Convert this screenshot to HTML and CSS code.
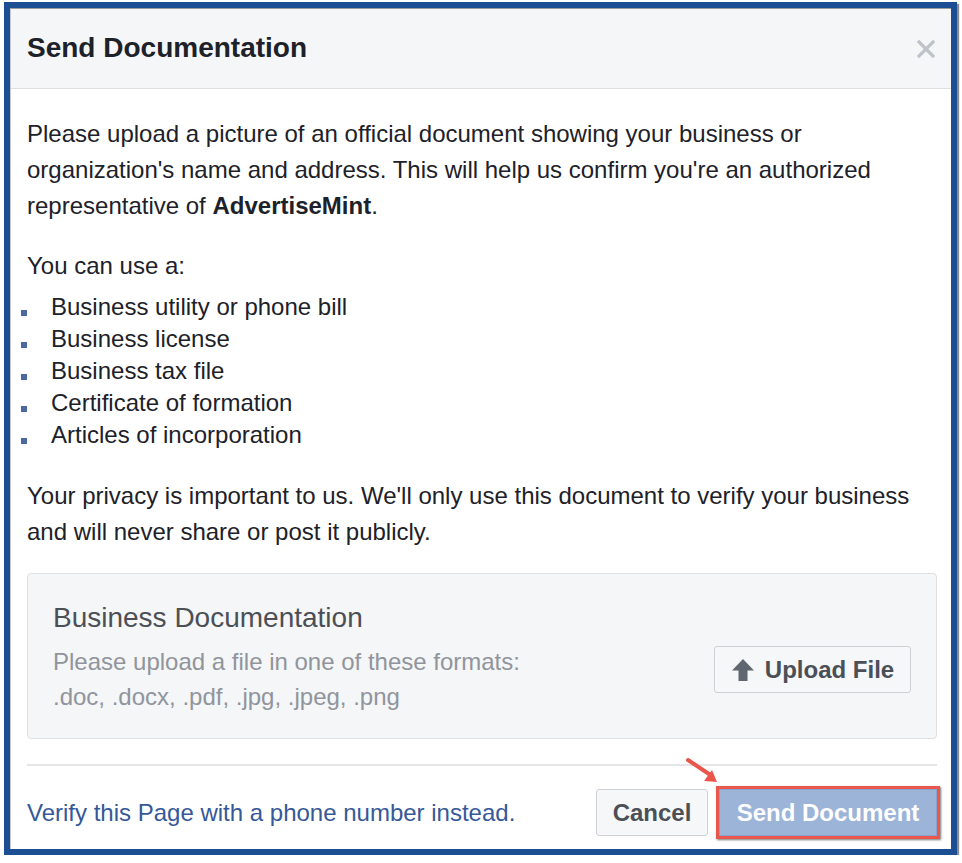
FILE: index.html
```html
<!DOCTYPE html>
<html>
<head>
<meta charset="utf-8">
<link rel="stylesheet" href="styles.css">
</head>
<body>
<div class="frame">
  <div class="dialog">
    <div class="header">
      <h1 class="title">Send Documentation</h1>
      <svg class="close" width="18" height="18" viewBox="0 0 18 18"><path d="M2 2L16 16M16 2L2 16" stroke="#bec3ca" stroke-width="3.2" stroke-linecap="square"/></svg>
    </div>
    <div class="body">
      <p class="para">Please upload a picture of an official document showing your business or organization's name and address. This will help us confirm you're an authorized representative of <b>AdvertiseMint</b>.</p>
      <p class="para">You can use a:</p>
      <ul class="list">
        <li>Business utility or phone bill</li>
        <li>Business license</li>
        <li>Business tax file</li>
        <li>Certificate of formation</li>
        <li>Articles of incorporation</li>
      </ul>
      <p class="para">Your privacy is important to us. We'll only use this document to verify your business and will never share or post it publicly.</p>
      <div class="upload-box">
        <div class="upload-text">
          <div class="upload-title">Business Documentation</div>
          <div class="upload-hint">Please upload a file in one of these formats:<br>.doc, .docx, .pdf, .jpg, .jpeg, .png</div>
        </div>
        <button class="btn upload-btn"><svg width="24" height="24" viewBox="0 0 24 24"><path d="M12 1L23 12.5H16.5V23H7.5V12.5H1Z" fill="#606770"/></svg>Upload File</button>
      </div>
    </div>
    <div class="footer">
      <a class="link" href="#">Verify this Page with a phone number instead.</a>
      <div class="actions">
        <button class="btn cancel">Cancel</button>
        <div class="highlight"><button class="btn primary">Send Document</button></div>
      </div>
    </div>
  </div>
  <svg class="arrow" width="40" height="32" viewBox="0 0 40 32"><path d="M4 4L28 20" stroke="#e9564c" stroke-width="4" stroke-linecap="round"/><path d="M33 26L20 25L28 14Z" fill="#e9564c"/></svg>
</div>
</body>
</html>
```
FILE: styles.css
```css
html, body {
  margin: 0;
  padding: 0;
  background: #ffffff;
}
body {
  font-family: "Liberation Sans", Arial, Helvetica, sans-serif;
  color: #1d2129;
}
.frame {
  position: relative;
  margin: 2px 0 0 4px;
  width: 953px;
  height: 853px;
  box-sizing: border-box;
  border: 6px solid #1b4e93;
  box-shadow: 2px 2px 1px #8c8c8c;
  background: #ffffff;
}
.dialog {
  height: 100%;
  box-sizing: border-box;
  border-top: 1px solid #9a9a9a;
  border-left: 1px solid #c8c8c8;
  display: flex;
  flex-direction: column;
}
.header {
  height: 79px;
  flex: none;
  background: #f5f6f7;
  border-bottom: 1px solid #dddfe2;
  display: flex;
  align-items: center;
  justify-content: space-between;
  padding: 0 16px 0 16px;
}
.title {
  margin: 0;
  font-size: 28px;
  font-weight: bold;
  color: #1d2129;
  padding-bottom: 2px;
}
.close {
  display: block;
  margin-top: 1px;
}
.body {
  padding: 27px 14px 0 16px;
}
.para {
  margin: 0 0 24px 0;
  font-size: 24px;
  line-height: 36px;
  color: #1d2129;
}
.list {
  margin: -17px 0 27px 0;
  padding: 0 0 0 24px;
  list-style: none;
}
.list li {
  position: relative;
  font-size: 24px;
  line-height: 32px;
}
.list li::before {
  content: "";
  position: absolute;
  left: -30px;
  top: 19px;
  width: 6px;
  height: 6px;
  background: #4b67a1;
}
.para + .upload-box { margin-top: -1px; }
.upload-box {
  height: 166px;
  box-sizing: border-box;
  background: #f5f6f7;
  border: 1px solid #dddfe2;
  border-radius: 4px;
  display: flex;
  align-items: flex-start;
  justify-content: space-between;
  padding: 28px 25px 0 25px;
}
.upload-title {
  font-size: 28px;
  line-height: 32px;
  color: #4b4f56;
  margin-bottom: 10px;
}
.upload-hint {
  font-size: 24px;
  line-height: 35px;
  color: #90949c;
}
.btn {
  font-family: "Liberation Sans", Arial, Helvetica, sans-serif;
  font-weight: bold;
  font-size: 24px;
  border-radius: 3px;
  cursor: pointer;
}
.upload-btn {
  height: 47px;
  width: 197px;
  margin-top: 44px;
  background: #f6f7f9;
  border: 1px solid #ced0d4;
  color: #4b4f56;
  display: flex;
  align-items: center;
  justify-content: center;
  gap: 10px;
  padding: 0;
}
.upload-btn svg { display: block; }
.footer {
  margin: 25px 14px 0 16px;
  border-top: 2px solid #e5e6e9;
  flex: 1;
  display: flex;
  align-items: center;
  justify-content: space-between;
  padding-top: 10px;
}
.link {
  color: #365899;
  font-size: 24px;
  text-decoration: none;
}
.actions {
  display: flex;
  align-items: center;
  gap: 8px;
  margin-right: -3px;
}
.cancel {
  height: 47px;
  width: 112px;
  background: #f6f7f9;
  border: 1px solid #ced0d4;
  color: #4b4f56;
  padding: 0;
}
.highlight {
  border: 3px solid #e9564c;
  box-shadow: 1px 1px 2px #777;
}
.primary {
  display: block;
  height: 47px;
  width: 218px;
  background: #9cb4d8;
  border: 1px solid #8aa3cc;
  border-radius: 0;
  color: #ffffff;
  padding: 0;
}
.arrow {
  position: absolute;
  left: 674px;
  top: 748px;
}
```
